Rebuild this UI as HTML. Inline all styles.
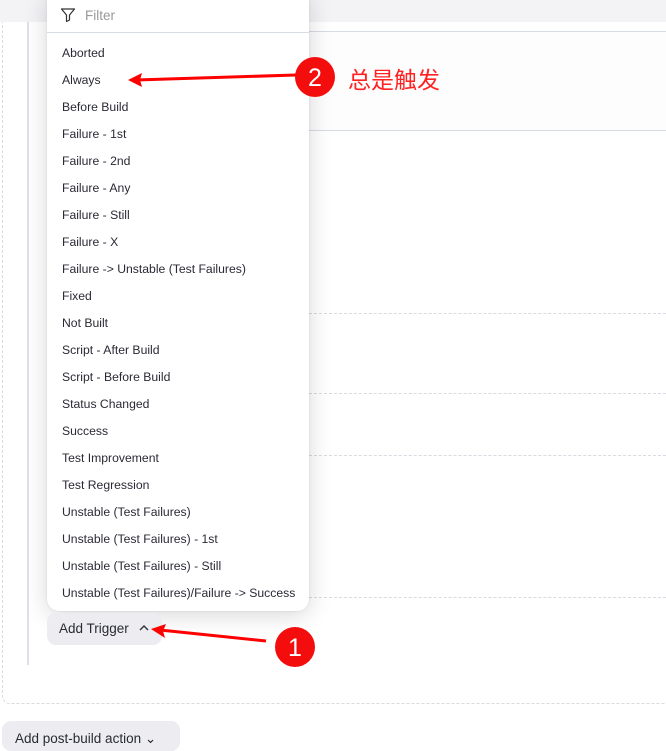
<!DOCTYPE html>
<html><head><meta charset="utf-8"><style>
body{margin:0;width:666px;height:736px;overflow:hidden;background:#fff;position:relative;font-family:"Liberation Sans","Noto Sans CJK SC",sans-serif;}
.abs{position:absolute}
.menu{left:47px;top:-10px;width:262px;height:621px;background:#fff;border-radius:12px;box-shadow:0 4px 24px rgba(0,0,0,.16),0 0 2px rgba(0,0,0,.1);}
.item{position:absolute;left:15px;font-size:12.2px;color:#2a2a35;line-height:16px;white-space:nowrap}
.dash{position:absolute;left:309px;right:0;border-top:1px dashed #d9dbe2;height:0}
</style></head><body>
<div class="abs" style="left:0;top:0;width:666px;height:22px;background:#f3f3f6"></div>
<div class="abs" style="left:309px;top:31px;right:0;height:1px;background:#d6dbe6"></div>
<div class="abs" style="left:309px;top:32px;right:0;height:98px;background:#fdfdfe"></div>
<div class="abs" style="left:309px;top:130px;right:0;height:1px;background:#d6dbe6"></div>
<div class="dash" style="top:313px"></div>
<div class="dash" style="top:393px"></div>
<div class="dash" style="top:455px"></div>
<div class="dash" style="top:597px"></div>
<div class="abs" style="left:2px;top:22px;width:700px;height:681px;border:1px dashed #d9dbe2;border-top:none;border-radius:0 0 8px 8px"></div>
<div class="abs" style="left:27px;top:22px;width:2px;height:643px;background:#dde0ea"></div>
<div class="abs menu">
 <svg class="abs" style="left:13px;top:17px" width="16" height="16" viewBox="0 0 16 16"><path d="M1.5 2h13l-5 6v5l-3 1.5V8z" fill="none" stroke="#333" stroke-width="1.2" stroke-linejoin="round"/></svg>
 <div class="abs" style="left:38px;top:18px;font-size:13.5px;color:#999">Filter</div>
 <div class="abs" style="left:0;right:0;top:42px;height:1px;background:#d6dbe6"></div>
 <div class="item" style="top:55px">Aborted</div>
 <div class="item" style="top:82px">Always</div>
 <div class="item" style="top:109px">Before Build</div>
 <div class="item" style="top:136px">Failure - 1st</div>
 <div class="item" style="top:163px">Failure - 2nd</div>
 <div class="item" style="top:190px">Failure - Any</div>
 <div class="item" style="top:217px">Failure - Still</div>
 <div class="item" style="top:244px">Failure - X</div>
 <div class="item" style="top:271px">Failure -&gt; Unstable (Test Failures)</div>
 <div class="item" style="top:298px">Fixed</div>
 <div class="item" style="top:325px">Not Built</div>
 <div class="item" style="top:352px">Script - After Build</div>
 <div class="item" style="top:379px">Script - Before Build</div>
 <div class="item" style="top:406px">Status Changed</div>
 <div class="item" style="top:433px">Success</div>
 <div class="item" style="top:460px">Test Improvement</div>
 <div class="item" style="top:487px">Test Regression</div>
 <div class="item" style="top:514px">Unstable (Test Failures)</div>
 <div class="item" style="top:541px">Unstable (Test Failures) - 1st</div>
 <div class="item" style="top:568px">Unstable (Test Failures) - Still</div>
 <div class="item" style="top:595px">Unstable (Test Failures)/Failure -&gt; Success</div>
</div>
<div class="abs" style="left:47px;top:613px;width:115px;height:32px;background:#ececf1;border-radius:9px"></div>
<div class="abs" style="left:59px;top:621px;font-size:13.5px;color:#2a2a35">Add Trigger</div>
<svg class="abs" style="left:138px;top:623px" width="12" height="10"><path d="M2 7l4-4 4 4" fill="none" stroke="#333" stroke-width="1.4"/></svg>
<div class="abs" style="left:2px;top:721px;width:178px;height:30px;background:#ececf1;border-radius:9px"></div>
<div class="abs" style="left:15px;top:731px;font-size:13.5px;color:#2a2a35">Add post-build action ⌄</div>
<svg class="abs" style="left:0;top:0" width="666" height="736">
 <g fill="#f00" stroke="#f00">
  <line x1="296" y1="75" x2="136" y2="80" stroke-width="3"/>
  <path d="M128 80l14-7-2 7 2 7z" stroke="none"/>
  <line x1="266" y1="641" x2="160" y2="630" stroke-width="3"/>
  <path d="M151 629l15-5-3 7 2 7z" stroke="none"/>
 </g>
 <circle cx="315" cy="77" r="20" fill="#f40d0d"/>
 <text x="315" y="86" font-size="25" fill="#fff" text-anchor="middle" font-family="Liberation Sans">2</text>
 <circle cx="295" cy="647" r="20" fill="#f40d0d"/>
 <text x="295" y="656" font-size="25" fill="#fff" text-anchor="middle" font-family="Liberation Sans">1</text>
 <text x="348" y="88" font-size="23" fill="#f22" font-family="Noto Sans CJK SC,sans-serif">总是触发</text>
</svg>
</body></html>
